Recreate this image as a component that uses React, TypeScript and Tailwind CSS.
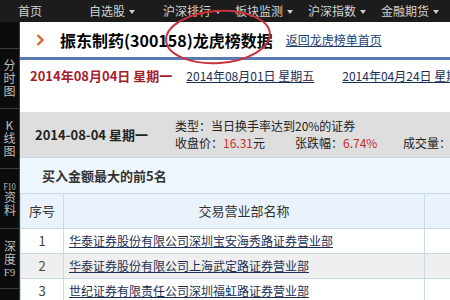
import React from 'react'

const navItems = [
  { label: '首页', ml: 'ml-[18px]', arrow: false },
  { label: '自选股', ml: 'ml-[47px]', arrow: true },
  { label: '沪深排行', ml: 'ml-[28px]', arrow: true },
  { label: '板块监测', ml: 'ml-[14px]', arrow: true },
  { label: '沪深指数', ml: 'ml-[15px]', arrow: true },
  { label: '金融期货', ml: 'ml-[15px]', arrow: true },
]

const sideItems: { pre?: string; text: string; post?: string }[] = [
  { text: '分时图' },
  { text: 'K线图' },
  { pre: 'F10', text: '资料' },
  { text: '深度', post: 'F9' },
  { text: '公告' },
]

const rows = [
  { no: 1, name: '华泰证券股份有限公司深圳宝安海秀路证券营业部', bg: 'bg-white' },
  { no: 2, name: '华泰证券股份有限公司上海武定路证券营业部', bg: 'bg-[#efefef]' },
  { no: 3, name: '世纪证券有限责任公司深圳福虹路证券营业部', bg: 'bg-white' },
]

function Caret() {
  return (
    <svg width="6" height="4" viewBox="0 0 6 4" className="ml-[4px] mt-[2px]">
      <path d="M0 0 L6 0 L3 4 Z" fill="#cfcfcf" />
    </svg>
  )
}

export default function App() {
  return (
    <div className="relative h-[300px] w-[450px] overflow-hidden bg-white font-['Noto_Sans_CJK_SC','Liberation_Sans',sans-serif]">
      {/* 顶部导航 */}
      <nav className="flex h-[22px] items-center bg-[#1c1c1c] text-[12px] leading-none text-[#d2d2d2]">
        {navItems.map((item) => (
          <div key={item.label} className={`flex items-center ${item.ml}`}>
            <span>{item.label}</span>
            {item.arrow && <Caret />}
          </div>
        ))}
      </nav>

      <div className="flex">
        {/* 左侧竖排菜单 */}
        <aside className="flex w-[20px] shrink-0 flex-col border-r border-[#3c3c3c] bg-[#0c0c0c] text-[12px] text-[#bdbdbd]">
          <div className="h-[26px]" />
          {sideItems.map((item, i) => (
            <div
              key={i}
              className="flex h-[60px] items-center justify-center border-t border-[#3a3a3a]"
            >
              <span className="leading-[19px] tracking-[1px] [text-orientation:upright] [writing-mode:vertical-rl]">
                {item.pre && (
                  <span className="font-['Liberation_Serif',serif] text-[11px] [text-combine-upright:all]">{item.pre}</span>
                )}
                {item.text}
                {item.post && (
                  <span className="font-['Liberation_Serif',serif] text-[11px] [text-combine-upright:all]">{item.post}</span>
                )}
              </span>
            </div>
          ))}
        </aside>

        <main className="min-w-0 flex-1">
          {/* 标题 */}
          <div className="flex h-[35px] items-center whitespace-nowrap">
            <svg width="8" height="12" viewBox="0 0 8 12" className="ml-[16px] shrink-0">
              <path d="M1.5 1 L6.5 6 L1.5 11" fill="none" stroke="#d4692a" strokeWidth="2.4" />
            </svg>
            <h1 className="ml-[16px] shrink-0 text-[16px] font-bold text-black">振东制药(300158)龙虎榜数据</h1>
            <a className="ml-[13px] shrink-0 text-[12px] text-[#1c3d6e] underline">返回龙虎榜单首页</a>
          </div>
          <div className="h-[3px] bg-[#5a7bb0]" />

          {/* 日期切换 */}
          <div className="flex h-[52px] items-start overflow-hidden whitespace-nowrap pt-[6px] text-[12px]">
            <span className="ml-[10px] shrink-0 text-[13px] font-bold text-[#a3202a]">2014年08月04日 星期一</span>
            <a className="ml-[14px] mt-[1px] shrink-0 text-[#1a2f55] underline">2014年08月01日 星期五</a>
            <a className="ml-[28px] mt-[1px] shrink-0 text-[#1a2f55] underline">2014年04月24日 星期一</a>
          </div>

          {/* 当日信息 */}
          <div className="flex h-[46px] items-center overflow-hidden whitespace-nowrap border-b border-[#c9d7e4] bg-[#dedede] text-[12px] text-[#222]">
            <span className="ml-[15px] w-[140px] shrink-0 text-[13px] font-bold">2014-08-04 星期一</span>
            <div className="flex shrink-0 flex-col gap-[3px] leading-[14px]">
              <span>类型：当日换手率达到20%的证券</span>
              <div className="flex">
                <span className="w-[120px]">
                  收盘价：<span className="text-[#cc2b2b]">16.31</span>元
                </span>
                <span className="w-[108px]">
                  张跌幅：<span className="text-[#cc2b2b]">6.74%</span>
                </span>
                <span>成交量：</span>
              </div>
            </div>
          </div>

          {/* 买入前5名 */}
          <div className="bg-[#eef6fd]">
            <div className="flex h-[35px] items-center pl-[22px] text-[13px] font-bold text-[#333]">
              买入金额最大的前5名
            </div>
            <table className="w-[440px] border-collapse text-[12px]">
              <thead>
                <tr className="h-[35px] bg-[#eaf3fb] text-[13px] text-[#333]">
                  <th className="w-[43px] border border-[#c9d9e7] font-normal">序号</th>
                  <th className="w-[361px] border border-[#c9d9e7] font-normal">交易营业部名称</th>
                  <th className="border border-[#c9d9e7]" />
                </tr>
              </thead>
              <tbody>
                {rows.map((r) => (
                  <tr key={r.no} className={`h-[25px] ${r.bg}`}>
                    <td className="border border-[#c9d9e7] text-center text-[13px] text-[#444]">{r.no}</td>
                    <td className="border border-[#c9d9e7] pl-[5px]">
                      <a className="text-[#1a2f55] underline">{r.name}</a>
                    </td>
                    <td className="border border-[#c9d9e7]" />
                  </tr>
                ))}
              </tbody>
            </table>
          </div>
        </main>
      </div>

      {/* 红色圈注 */}
      <svg
        className="pointer-events-none absolute left-[161px] top-[7px]"
        width="116"
        height="62"
        viewBox="0 0 116 62"
      >
        <ellipse
          cx="57"
          cy="30"
          rx="52"
          ry="26"
          fill="none"
          stroke="#c8333f"
          strokeWidth="2"
          transform="rotate(-4 57 30)"
        />
      </svg>
    </div>
  )
}
